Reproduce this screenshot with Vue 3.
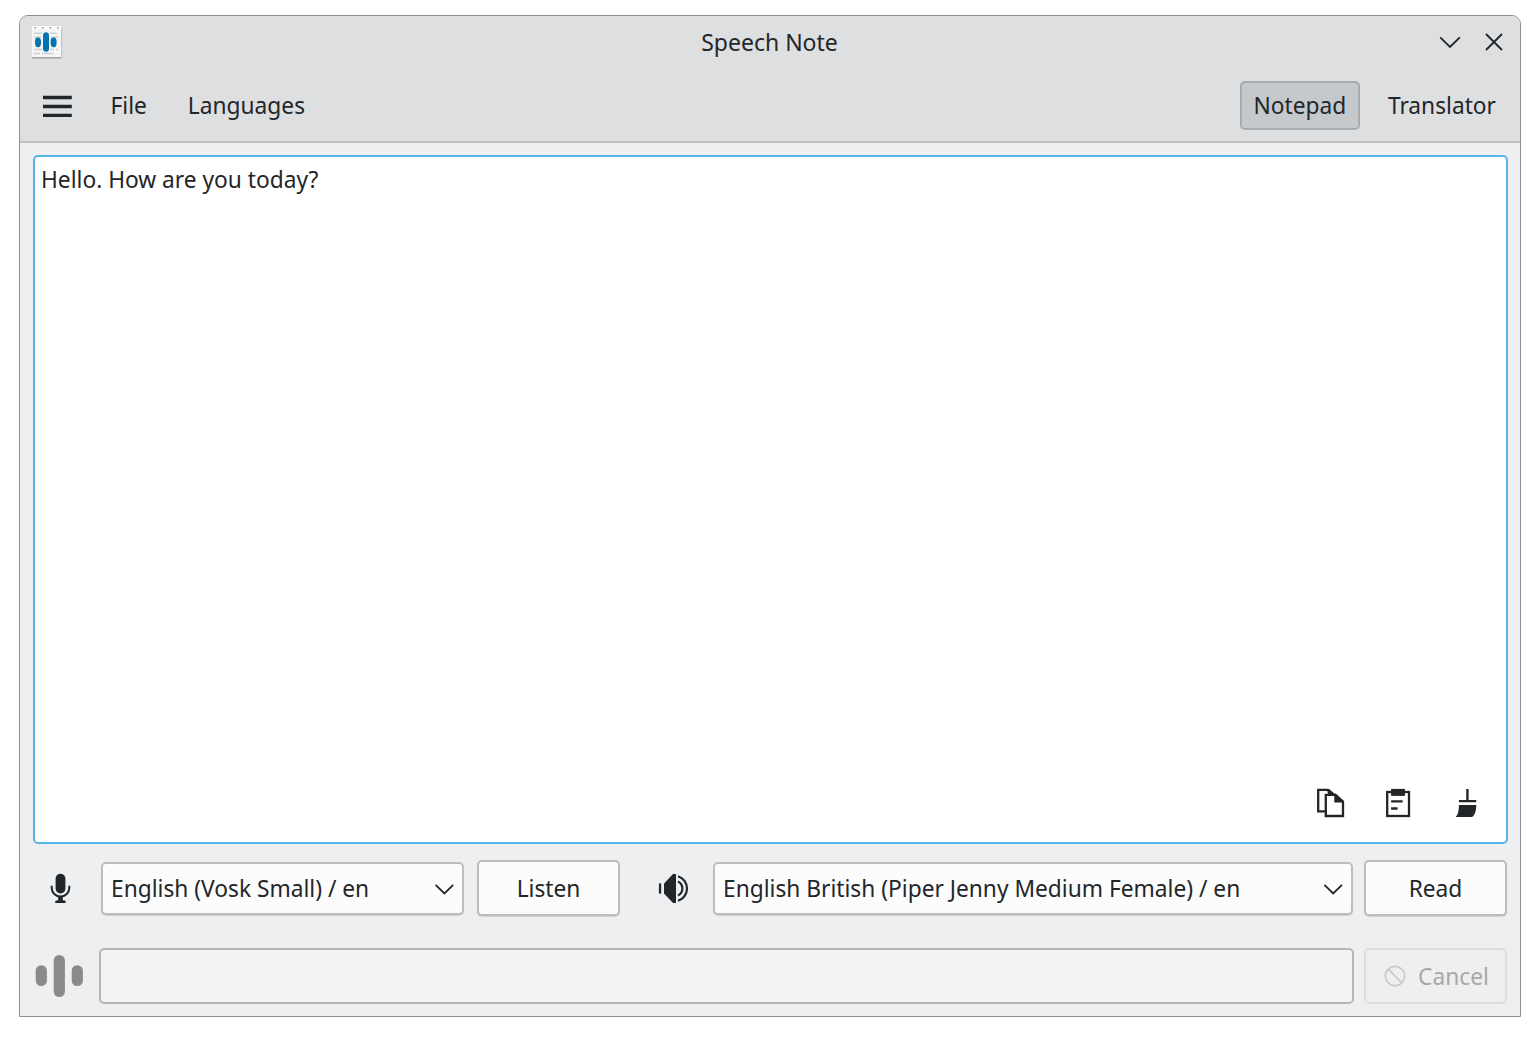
<script setup>
const menus = ['File', 'Languages']
const tabs = [
  { label: 'Notepad', active: true },
  { label: 'Translator', active: false },
]
</script>

<template>
  <div class="window">
    <header class="header">
      <div class="titlebar">
        <svg class="app-icon" width="32" height="36" viewBox="0 0 32 36">
          <path d="M2 3H31.2V32L30 34H2z" fill="#8f9294" opacity=".35" />
          <rect x="1" y="31" width="29" height="2.2" fill="#a3a5a6" />
          <rect x="1" y="1" width="29" height="31" fill="#f5f6f6" />
          <rect x="1" y="1" width="29" height="3" fill="#fdfdfd" />
          <g fill="#8d8f90">
            <rect x="3.5" y="2" width="1.6" height="1.4" />
            <rect x="11" y="2" width="1.6" height="1.4" />
            <rect x="18.5" y="2" width="1.6" height="1.4" />
            <rect x="26" y="2" width="1.6" height="1.4" />
          </g>
          <path d="M3 8.2h8M19 8.2h7M3 12.2h7M20 12.2h7M3 24.5h8M19 24.5h4M25 24.5h2M3 28.5h6M11 28.5h12" stroke="#cfd0d1" stroke-width="1.6" />
          <g fill="#0572b1">
            <rect x="4" y="12.4" width="6" height="9.8" rx="3" ry="4.2" />
            <rect x="12" y="7.2" width="6" height="19.6" rx="3" ry="3.6" />
            <rect x="19.6" y="12.4" width="6" height="9.8" rx="3" ry="4.2" />
          </g>
        </svg>
        <h1 class="title">Speech Note</h1>
        <div class="controls">
          <svg width="22" height="22" viewBox="0 0 22 22"><path d="M1.2 6.3 11 16 20.8 6.3" /></svg>
          <svg width="22" height="22" viewBox="0 0 22 22"><path d="M3 3 19 19M19 3 3 19" /></svg>
        </div>
      </div>
      <nav class="toolbar">
        <svg class="burger" width="30" height="24" viewBox="0 0 30 24">
          <path d="M1 3.5H29.8M1 12.5H29.8M1 21.3H29.8" stroke="#232629" stroke-width="3.3" />
        </svg>
        <span v-for="m in menus" :key="m" class="menu">{{ m }}</span>
        <div class="tabs">
          <span v-for="t in tabs" :key="t.label" class="tab" :class="{ active: t.active }">{{ t.label }}</span>
        </div>
      </nav>
    </header>

    <main class="body">
      <section class="editor">
        <p class="note">Hello. How are you today?</p>
        <div class="actions">
          <svg width="30" height="30" viewBox="0 0 30 30">
            <path d="M9 23.3H2.2V1.9H12L19 8" fill="none" stroke="#232629" stroke-width="2.3" />
            <path d="M11 .9H13L20 6.9H16L12 6.5z" fill="#232629" />
            <path d="M9.8 6.8H19L27 14V28H9.8z" fill="#fff" stroke="#232629" stroke-width="2.3" />
            <path d="M18.3 5.8H20L28 13V14.6H18.3z" fill="#232629" />
          </svg>
          <svg width="30" height="30" viewBox="0 0 30 30">
            <rect x="3.2" y="4" width="21.8" height="24" fill="none" stroke="#232629" stroke-width="2.3" />
            <rect x="7.1" y=".9" width="13.8" height="7" fill="#232629" />
            <path d="M7.1 13.3H18.6M7.1 20.5H13.6" stroke="#232629" stroke-width="2.3" />
          </svg>
          <svg class="broom" width="30" height="30" viewBox="0 0 30 30">
            <path d="M12.2 .9H14.6V12H22.3V14.3H4.9V12H12.2z" fill="#232629" />
            <path d="M4.9 17H22.3C22.2 22 21.4 25.6 19.2 28.3Q18.4 29 17.3 29H1.6C4.4 26.6 4.8 22 4.9 17z" fill="#232629" />
          </svg>
        </div>
      </section>

      <section class="row engines">
        <svg class="mic" width="24" height="32" viewBox="0 0 24 32">
          <rect x="6.6" y="1.7" width="9.8" height="19.8" rx="4.9" fill="#232629" />
          <path d="M2.7 13.8V15.8A8.8 8.8 0 0 0 20.3 15.8V13.8" fill="none" stroke="#232629" stroke-width="2" />
          <path d="M9.2 24H13.8V28.3L16.6 28.8V31H6.3V28.8L9.2 28.3z" fill="#232629" />
        </svg>
        <div class="combo stt">
          <span>English (Vosk Small) / en</span>
          <svg width="20" height="20" viewBox="0 0 20 20"><path d="M1.6 5.8 10.4 14.5 19.2 5.8" /></svg>
        </div>
        <button class="button listen">Listen</button>
        <svg class="speaker" width="32" height="32" viewBox="0 0 32 32">
          <path d="M1.9 11.4H4.2V21.6H1.9z" fill="#232629" />
          <path d="M7 11.4 16 1.9H19V31H16L7 21.6z" fill="#232629" />
          <g fill="none" stroke="#232629" stroke-width="2.2">
            <path d="M21 4.2A12.9 12.9 0 0 1 21 28.8" />
            <path d="M21 9.5A7.8 7.8 0 0 1 21 23.5" />
          </g>
        </svg>
        <div class="combo tts">
          <span>English British (Piper Jenny Medium Female) / en</span>
          <svg width="20" height="20" viewBox="0 0 20 20"><path d="M1.4 5.8 10.2 14.5 19 5.8" /></svg>
        </div>
        <button class="button read">Read</button>
      </section>

      <section class="row status">
        <svg class="wave" width="50" height="44" viewBox="0 0 50 44">
          <g fill="#898a8c">
            <rect x=".7" y="11.2" width="11.2" height="20.8" rx="5.5" />
            <rect x="18.7" y="1" width="11.2" height="42" rx="5.5" />
            <rect x="36.7" y="11.2" width="11.2" height="20.8" rx="5.5" />
          </g>
        </svg>
        <div class="progress"></div>
        <button class="button cancel" disabled>
          <svg width="22" height="22" viewBox="0 0 22 22">
            <circle cx="11" cy="11" r="9.7" /><path d="M4.2 4.2 17.8 17.8" />
          </svg>
          <span>Cancel</span>
        </button>
      </section>
    </main>
  </div>
</template>

<style>
body { margin: 0; background: #fff; }
</style>

<style scoped>
* { box-sizing: border-box; }
svg { display: block; flex: none; }
.window {
  width: 1502px;
  height: 1002px;
  margin: 15px 0 0 19px;
  border: 1px solid #8e8f91;
  border-radius: 9px 9px 0 0;
  overflow: hidden;
  background: #eeeff1;
  color: #232629;
  font: 22.74px/32px "Noto Sans", sans-serif;
  white-space: nowrap;
  display: flex;
  flex-direction: column;
}
.header {
  height: 127px;
  background: #dedfe1;
  border-bottom: 2px solid #bfc0c2;
}
.titlebar {
  height: 53px;
  display: grid;
  grid-template-columns: 1fr auto 1fr;
  align-items: center;
  padding: 0 15px 0 11px;
}
.app-icon { margin-top: 1px; }
.title { margin: 0 0 2px 3px; font-size: 23px; font-weight: 400; }
.controls { display: flex; justify-content: flex-end; gap: 22px; padding-bottom: 2px; }
.controls path, .combo path { fill: none; stroke: #232629; stroke-width: 1.8; }
.toolbar { height: 72px; display: flex; align-items: center; padding: 0 10px 0 22px; }
.burger { margin: 2px 18px 0 0; }
.menu { padding: 2px 20.5px 0; }
.tabs { display: flex; margin-left: auto; gap: 14px; }
.tab { height: 49px; line-height: 49px; padding: 0 14px; border-radius: 5px; }
.tab.active { width: 120px; text-align: center; padding: 0; background: #c5c9cc; border: 2px solid #a9acae; line-height: 45px; }
.body { flex: 1; display: flex; flex-direction: column; padding: 12px 12px 12px 13px; }
.editor {
  height: 689px;
  display: flex;
  flex-direction: column;
  justify-content: space-between;
  background: #fff;
  border: 2px solid #55b6e6;
  border-radius: 5px;
  padding: 7px 22px 24px 6px;
}
.note { margin: 0; }
.actions { display: flex; justify-content: flex-end; gap: 38px; }
.broom { margin-left: 2px; }
.row { display: flex; align-items: center; }
.engines { height: 56px; margin-top: 16px; }
.mic { margin: 0 28px 0 16px; }
.combo {
  height: 53px;
  display: flex;
  align-items: center;
  justify-content: space-between;
  padding: 2px 8px 0;
  background: #fcfcfc;
  border: 2px solid #bcbdbf;
  border-radius: 5px;
  box-shadow: 0 1px 0 #cfd0d2;
}
.stt { width: 363px; }
.tts { width: 640px; }
.button {
  width: 143px;
  height: 56px;
  display: flex;
  align-items: center;
  justify-content: center;
  padding: 2px 0 0;
  background: #fcfcfc;
  border: 2px solid #bcbdbf;
  border-radius: 5px;
  box-shadow: 0 1px 0 #cfd0d2;
  color: inherit;
  font: inherit;
}
.listen { margin: 0 37px 0 13px; }
.speaker { margin-right: 24px; }
.read { margin: 0 1px 0 auto; }
.status { height: 56px; margin-top: 32px; }
.wave { margin: 0 14px 0 2px; }
.progress { width: 1255px; height: 56px; background: #f3f3f3; border: 2px solid #b5b6b8; border-radius: 5px; }
.cancel { margin: 0 1px 0 auto; padding: 0 0 0 2px; gap: 12px; background: #efeff0; border-color: #dcddde; box-shadow: none; color: #a7a8aa; }
.cancel span { padding-top: 2px; }
.cancel svg { fill: none; stroke: #c8c9ca; stroke-width: 1.7; }
</style>
